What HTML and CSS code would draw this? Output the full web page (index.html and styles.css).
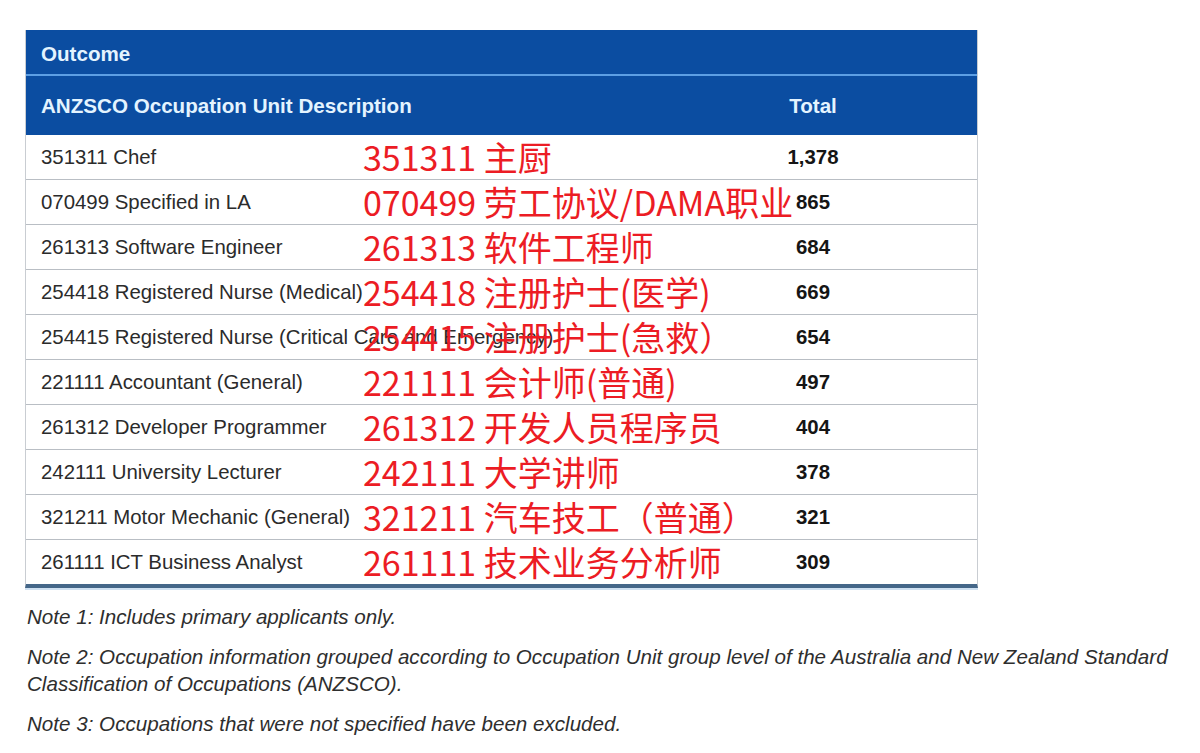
FILE: index.html
```html
<!DOCTYPE html>
<html lang="en">
<head>
<meta charset="utf-8">
<title>Outcome - ANZSCO Occupation Unit Description</title>
<link rel="stylesheet" href="styles.css">
</head>
<body>
<div class="page">
  <div class="table">
    <div class="head head-top">Outcome</div>
    <div class="head head-cols row-grid">
      <div class="desc">ANZSCO Occupation Unit Description</div>
      <div class="note-cell"></div>
      <div class="total">Total</div>
    </div>
    <div class="row row-grid"><div class="desc">351311 Chef</div><div class="zh">351311 主厨</div><div class="total">1,378</div></div>
    <div class="row row-grid"><div class="desc">070499 Specified in LA</div><div class="zh">070499 劳工协议/DAMA职业</div><div class="total">865</div></div>
    <div class="row row-grid"><div class="desc">261313 Software Engineer</div><div class="zh">261313 软件工程师</div><div class="total">684</div></div>
    <div class="row row-grid"><div class="desc">254418 Registered Nurse (Medical)</div><div class="zh">254418 注册护士(医学)</div><div class="total">669</div></div>
    <div class="row row-grid"><div class="desc">254415 Registered Nurse (Critical Care and Emergency)</div><div class="zh">254415 注册护士(急救）</div><div class="total">654</div></div>
    <div class="row row-grid"><div class="desc">221111 Accountant (General)</div><div class="zh">221111 会计师(普通)</div><div class="total">497</div></div>
    <div class="row row-grid"><div class="desc">261312 Developer Programmer</div><div class="zh">261312 开发人员程序员</div><div class="total">404</div></div>
    <div class="row row-grid"><div class="desc">242111 University Lecturer</div><div class="zh">242111 大学讲师</div><div class="total">378</div></div>
    <div class="row row-grid"><div class="desc">321211 Motor Mechanic (General)</div><div class="zh">321211 汽车技工（普通）</div><div class="total">321</div></div>
    <div class="row row-grid last"><div class="desc">261111 ICT Business Analyst</div><div class="zh">261111 技术业务分析师</div><div class="total">309</div></div>
  </div>
  <div class="notes">
    <p>Note 1: Includes primary applicants only.</p>
    <p>Note 2: Occupation information grouped according to Occupation Unit group level of the Australia and New Zealand Standard<br>Classification of Occupations (ANZSCO).</p>
    <p>Note 3: Occupations that were not specified have been excluded.</p>
  </div>
</div>
</body>
</html>
```

FILE: styles.css
```css
html, body {
  margin: 0;
  padding: 0;
  background: #ffffff;
}

.page {
  padding: 30px 0 0 25px;
  font-family: "Liberation Sans", Arial, sans-serif;
  color: #2a2a2a;
}

.table {
  width: 953px;
  box-sizing: border-box;
  border-left: 1px solid #c9cdd2;
  border-right: 1px solid #c9cdd2;
  border-bottom: 4px solid #456789;
  box-shadow: 0 2px 0 #cfe1f2;
}

.head {
  background: #0b4da1;
  color: #e4f4ff;
  font-weight: bold;
  font-size: 20.6px;
}

.head-top {
  height: 44px;
  line-height: 47px;
  padding-left: 15px;
  border-bottom: 2px solid #5d9fe4;
}

.head-cols {
  height: 59px;
  padding-top: 1px;
  box-sizing: border-box;
}

.row-grid {
  display: grid;
  grid-template-columns: 337px 335px 230px 1fr;
  align-items: center;
}

.desc {
  padding-left: 15px;
  white-space: nowrap;
  font-size: 20.4px;
}

.head .desc {
  font-size: 20.6px;
}

.total {
  text-align: center;
  font-weight: bold;
  font-size: 20.4px;
  color: #151515;
}

.head .total {
  color: #e4f4ff;
  font-size: 20.6px;
}

.row {
  height: 44px;
  border-bottom: 1px solid #b9bec4;
}

.row.last {
  border-bottom: none;
}

.row .desc {
  color: #2b2b2b;
}

.zh {
  position: relative;
  z-index: 1;
  white-space: nowrap;
  font-family: "Noto Sans CJK SC", "Liberation Sans", sans-serif;
  font-size: 34px;
  line-height: 44px;
  color: #ec1c24;
}

.notes {
  padding-top: 15px;
  font-style: italic;
  font-size: 20.6px;
  color: #2e2e2e;
}

.notes p {
  margin: 0 0 13px 2px;
  line-height: 27px;
}
```
